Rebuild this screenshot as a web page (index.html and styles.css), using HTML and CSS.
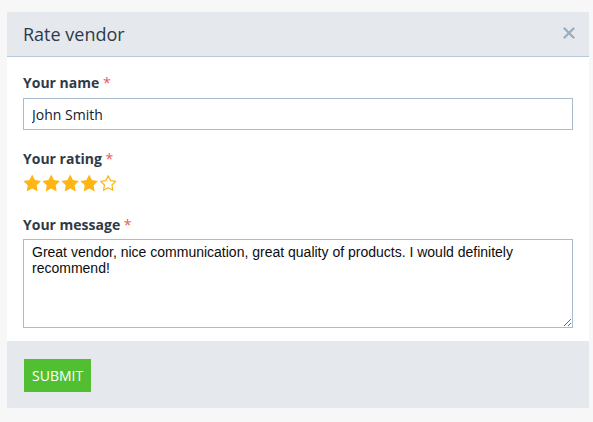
FILE: index.html
```html
<!DOCTYPE html>
<html lang="en">
  <head>
    <meta charset="UTF-8" />
    <meta name="viewport" content="width=device-width, initial-scale=1.0" />
    <title>Rate vendor</title>
    <link rel="stylesheet" href="styles.css">
  </head>
  <body>
    <div class="modal">
      <!-- Header -->
      <div class="modal-header">
        <h2>Rate vendor</h2>
        <button class="close" aria-label="Close">
          <svg width="12" height="12" viewBox="0 0 12 12">
            <path d="M1.5 1.5 L10.5 10.5 M10.5 1.5 L1.5 10.5" stroke="currentColor" stroke-width="2.4" stroke-linecap="round" />
          </svg>
        </button>
      </div>

      <!-- Body -->
      <form class="modal-body">
        <div class="field">
          <label>Your name <span class="req">*</span></label>
          <input type="text" value="John Smith" />
        </div>

        <div class="field">
          <label>Your rating <span class="req">*</span></label>
          <div class="stars">
            <svg class="star" viewBox="0 0 24 24"><path d="M12 .6l3.6 7.3 8 1.2-5.8 5.7 1.4 8-7.2-3.8-7.2 3.8 1.4-8-5.8-5.7 8-1.2z" /></svg>
            <svg class="star" viewBox="0 0 24 24"><path d="M12 .6l3.6 7.3 8 1.2-5.8 5.7 1.4 8-7.2-3.8-7.2 3.8 1.4-8-5.8-5.7 8-1.2z" /></svg>
            <svg class="star" viewBox="0 0 24 24"><path d="M12 .6l3.6 7.3 8 1.2-5.8 5.7 1.4 8-7.2-3.8-7.2 3.8 1.4-8-5.8-5.7 8-1.2z" /></svg>
            <svg class="star" viewBox="0 0 24 24"><path d="M12 .6l3.6 7.3 8 1.2-5.8 5.7 1.4 8-7.2-3.8-7.2 3.8 1.4-8-5.8-5.7 8-1.2z" /></svg>
            <svg class="star empty" viewBox="0 0 24 24"><path d="M12 2.4l3 6.2 6.8 1-4.9 4.8 1.2 6.8-6.1-3.2-6.1 3.2 1.2-6.8-4.9-4.8 6.8-1z" /></svg>
          </div>
        </div>

        <div class="field last">
          <label>Your message <span class="req">*</span></label>
          <textarea>Great vendor, nice communication, great quality of products. I would definitely recommend!</textarea>
        </div>
      </form>

      <!-- Footer -->
      <div class="modal-footer">
        <button class="submit">Submit</button>
      </div>
    </div>
  </body>
</html>
```

FILE: styles.css
```css
* {
  margin: 0;
  padding: 0;
  box-sizing: border-box;
  font-family: 'Open Sans', sans-serif;
}

body {
  background: #f7f7f7;
  padding: 12px 4px 0 7px;
}

.modal {
  width: 582px;
  background: #fff;
}

/* Header */
.modal-header {
  display: flex;
  justify-content: space-between;
  align-items: center;
  height: 45px;
  padding: 0 14px 0 16px;
  background: #e5e9ee;
  border-bottom: 1px solid #b7c8d8;
}

.modal-header h2 {
  font-size: 18px;
  font-weight: 400;
  color: #2c3a4b;
  line-height: 24px;
}

.close {
  display: flex;
  border: none;
  background: none;
  color: #9badbf;
  margin-top: -3px;
  cursor: pointer;
}

/* Body */
.modal-body {
  padding: 16px 16px 13px;
}

.field {
  margin-bottom: 19px;
}

.field.last {
  margin-bottom: 0;
}

label {
  display: block;
  font-size: 14px;
  font-weight: 700;
  line-height: 20px;
  color: #2f3a48;
  margin-bottom: 5px;
}

.req {
  color: #e8595a;
  font-weight: 400;
}

input,
textarea {
  display: block;
  width: 100%;
  border: 1px solid #a9bccd;
  background: #fff;
  color: #14202e;
  outline: none;
}

input {
  height: 32px;
  padding: 0 8px;
  font-size: 14px;
}

textarea {
  height: 89px;
  padding: 4px 8px;
  font-family: 'Liberation Sans', Arial, sans-serif;
  font-size: 14px;
  line-height: 16px;
  color: #0d0d0d;
  margin-top: -1px;
}

.stars {
  display: flex;
  gap: 0.5px;
  height: 22px;
}

.star {
  width: 18.4px;
  height: 18.4px;
  fill: #fdb614;
}

.star.empty {
  fill: #fff;
  stroke: #fdb614;
  stroke-width: 1.6;
  stroke-linejoin: round;
}

/* Footer */
.modal-footer {
  height: 67px;
  padding: 18px 17px 0;
  background: #e5e9ee;
}

.submit {
  height: 33px;
  padding: 0 8px;
  background: #52bf33;
  border: none;
  color: #fff;
  font-size: 14px;
  text-transform: uppercase;
  cursor: pointer;
}
```
